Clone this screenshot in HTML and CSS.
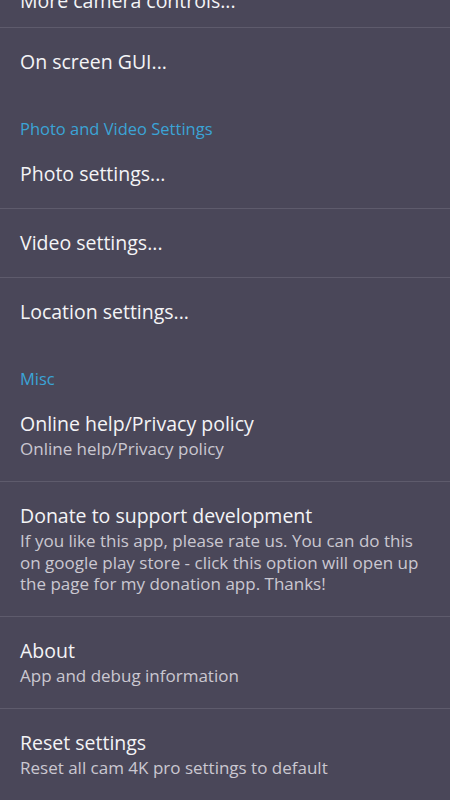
FILE: index.html
```html
<!DOCTYPE html>
<html lang="en">
<head>
    <meta charset="UTF-8">
    <meta name="viewport" content="width=device-width, initial-scale=1.0">
    <title>Settings</title>
    <link rel="stylesheet" href="styles.css">
</head>
<body>
    <div class="nastroyki">
        <div class="punkt">
            <div class="punkt-title">More camera controls...</div>
        </div>
        <div class="punkt">
            <div class="punkt-title">On screen GUI...</div>
        </div>

        <div class="kategoriya">Photo and Video Settings</div>
        <div class="punkt">
            <div class="punkt-title">Photo settings...</div>
        </div>
        <div class="punkt">
            <div class="punkt-title">Video settings...</div>
        </div>
        <div class="punkt">
            <div class="punkt-title">Location settings...</div>
        </div>

        <div class="kategoriya">Misc</div>
        <div class="punkt">
            <div class="punkt-title">Online help/Privacy policy</div>
            <div class="punkt-summary">Online help/Privacy policy</div>
        </div>
        <div class="punkt">
            <div class="punkt-title">Donate to support development</div>
            <div class="punkt-summary">If you like this app, please rate us. You can do this on google play store - click this option will open up the page for my donation app. Thanks!</div>
        </div>
        <div class="punkt">
            <div class="punkt-title">About</div>
            <div class="punkt-summary">App and debug information</div>
        </div>
        <div class="punkt">
            <div class="punkt-title">Reset settings</div>
            <div class="punkt-summary">Reset all cam 4K pro settings to default</div>
        </div>
    </div>
</body>
</html>
```

FILE: styles.css
```css
* {
    margin: 0;
    padding: 0;
    box-sizing: border-box;
    font-family: 'Open Sans', sans-serif;
}

body {
    background-color: #4a4759;
    overflow: hidden;
}

/* list is scrolled, first item is cut off at the top */
.nastroyki {
    margin-top: -33px;
    display: flex;
    flex-direction: column;
}

.punkt {
    padding: 21px 16px 21px 20px;
}

.punkt:first-child {
    padding-bottom: 13px;
}

.punkt + .punkt {
    border-top: 1px solid #5e5b6c;
}

.punkt-title {
    font-size: 19.5px;
    line-height: 26px;
    color: #f4f4f6;
}

.punkt-title + .punkt-summary {
    margin-top: 1px;
}

.punkt:has(.punkt-summary) {
    padding-bottom: 21.5px;
}

.punkt-summary {
    font-size: 17px;
    line-height: 21.5px;
    color: #cac8d1;
}

.kategoriya {
    height: 44px;
    padding: 23px 20px 0 20px;
    font-size: 16.5px;
    line-height: 20px;
    color: #3ba4d6;
}
```
